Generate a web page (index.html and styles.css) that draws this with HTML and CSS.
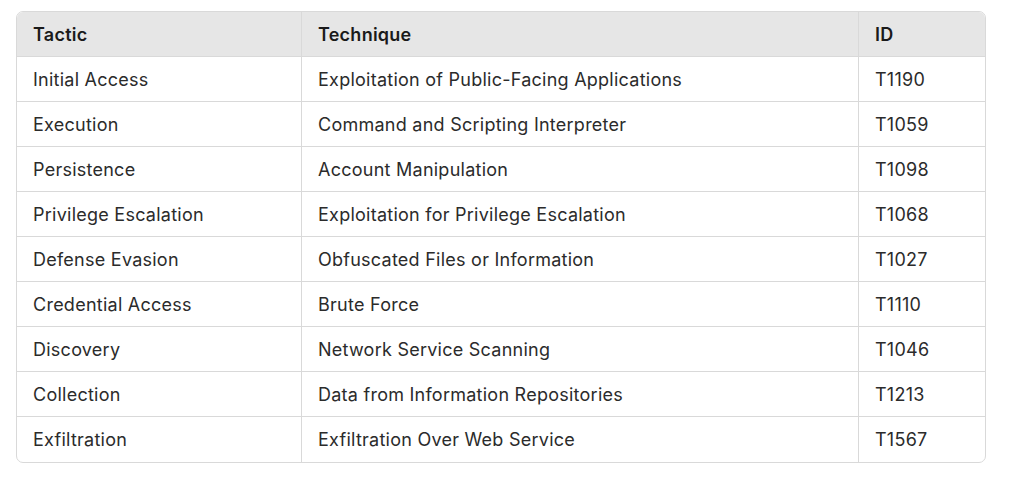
FILE: index.html
```html
<!DOCTYPE html>
<html>
<head>
<meta charset="utf-8">
<link rel="stylesheet" href="styles.css">
</head>
<body>
<div class="wrap">
<table class="mitre">
<thead>
<tr><th class="c1">Tactic</th><th class="c2">Technique</th><th class="c3">ID</th></tr>
</thead>
<tbody>
<tr><td>Initial Access</td><td>Exploitation of Public-Facing Applications</td><td>T1190</td></tr>
<tr><td>Execution</td><td>Command and Scripting Interpreter</td><td>T1059</td></tr>
<tr><td>Persistence</td><td>Account Manipulation</td><td>T1098</td></tr>
<tr><td>Privilege Escalation</td><td>Exploitation for Privilege Escalation</td><td>T1068</td></tr>
<tr><td>Defense Evasion</td><td>Obfuscated Files or Information</td><td>T1027</td></tr>
<tr><td>Credential Access</td><td>Brute Force</td><td>T1110</td></tr>
<tr><td>Discovery</td><td>Network Service Scanning</td><td>T1046</td></tr>
<tr><td>Collection</td><td>Data from Information Repositories</td><td>T1213</td></tr>
<tr><td>Exfiltration</td><td>Exfiltration Over Web Service</td><td>T1567</td></tr>
</tbody>
</table>
</div>
</body>
</html>
```
FILE: styles.css
```css
html, body {
  margin: 0;
  padding: 0;
  background: #ffffff;
}
body {
  font-family: Inter, "Liberation Sans", sans-serif;
  color: #2b2b2b;
}
.wrap {
  padding: 11px 0 0 16px;
}
.mitre {
  width: 970px;
  border-collapse: separate;
  border-spacing: 0;
  border: 1px solid #d9d9d9;
  border-radius: 7px;
  overflow: hidden;
  font-size: 18px;
  letter-spacing: 0.25px;
}
.mitre th, .mitre td {
  height: 45px;
  padding: 0 16px;
  box-sizing: border-box;
  text-align: left;
  vertical-align: middle;
  border-right: 1px solid #d9d9d9;
  border-bottom: 1px solid #d9d9d9;
}
.mitre th:last-child, .mitre td:last-child {
  border-right: none;
}
.mitre tbody tr:last-child td {
  border-bottom: none;
}
.mitre th {
  background: #e6e6e6;
  font-weight: 600;
  color: #1a1a1a;
}
.c1 { width: 285px; }
.c2 { width: 557px; }
.c3 { width: 126px; }
```
